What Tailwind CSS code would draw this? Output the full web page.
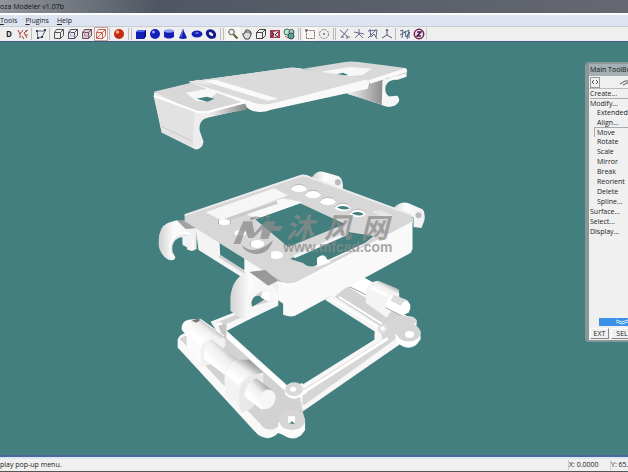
<!DOCTYPE html>
<html lang="en">
  <head>
    <meta charset="UTF-8" />
    <meta name="viewport" content="width=device-width, initial-scale=1.0" />
    <title>Zanoza Modeler v1.07b</title>
    <script src="https://cdn.jsdelivr.net/npm/@tailwindcss/browser@4"></script>
  </head>
  <body class="flex h-screen flex-col overflow-hidden bg-[#f0f0f0] font-['Open_Sans',sans-serif] text-[#222]">
    <!-- Title bar -->
    <header class="h-[13px] shrink-0 overflow-hidden whitespace-nowrap bg-linear-to-r from-[#92969b] via-[#505762] via-25% to-[#656871]">
      <h1 class="text-[7px] leading-[13px] text-[#111]">oza Modeler v1.07b</h1>
    </header>

    <!-- Menu -->
    <nav class="flex h-[13px] shrink-0 items-center gap-2 border-t-2 border-white bg-[#dde3f1] text-[7px] leading-[10px]">
      <a href="#tools"><u>T</u>ools</a>
      <a href="#plugins"><u>P</u>lugins</a>
      <a href="#help"><u>H</u>elp</a>
    </nav>

    <!-- Toolbar -->
    <div class="flex h-4 shrink-0 items-center border-y border-t-[#c9ccd2] border-b-[#3c5d8c] bg-[#f0efef] pl-[2px] [&_button]:grid [&_button]:h-[14px] [&_button]:w-[14px] [&_button]:shrink-0 [&_button]:place-items-center [&_svg]:h-3 [&_svg]:w-3 [&_svg]:fill-none">
      <button aria-label="Dummy" class="text-[8px] font-bold leading-3">D</button>
      <button aria-label="Vertices"><svg viewBox="0 0 12 12" stroke="#b33a35"><path d="M1 2l2 4 3-4M3 6v4M7 5l4-3M7 5l3 5M8 7h3" /><path d="M5 8l2 3M9 2v2" stroke="#555" /></svg></button>
      <span class="mx-px h-3 w-[2px] border-l border-[#bbb]"></span>
      <button aria-label="Polylines"><svg viewBox="0 0 12 12" stroke="#37435c"><path d="M2 3l8 0-3 6-4 1z" stroke-width=".8" /><path d="M1 2h2v2H1zM9 1h2v2H9zM6 8h2v2H6zM2 9h2v2H2z" fill="#37435c" stroke="none" /></svg></button>
      <span class="mx-px h-3 w-[2px] border-l border-[#bbb]"></span>
      <button aria-label="Wireframe"><svg viewBox="0 0 12 12" stroke="#555"><path d="M1.500 4.500h6v6h-6zM3.500 1.500h7v6l-3 3M1.500 4.500l2-3M7.500 4.500l3-3" /></svg></button>
      <button aria-label="Hidden lines"><svg viewBox="0 0 12 12" stroke="#544d60"><path d="M1.500 4.500h6v6h-6zM3.500 1.500h7v6l-3 3M1.500 4.500l2-3M7.500 4.500l3-3" /><path d="M3.500 2v6h6" stroke="#b5a9cc" /></svg></button>
      <button aria-label="Flat shading"><svg viewBox="0 0 12 12" stroke="#6c4c5f"><path d="M1.500 4.500h6v6h-6zM3.500 1.500h7v6l-3 3M1.500 4.500l2-3M7.500 4.500l3-3" fill="#ddccd5" /><path d="M3.500 2v6h6" stroke="#b58ba0" /></svg></button>
      <button aria-label="Textured" aria-pressed="true" class="border border-[#c9a5a0] bg-[#fff4f1]"><svg viewBox="0 0 12 12" stroke="#c56052"><path d="M1.500 4.500h6v6h-6zM3.500 1.500h7v6l-3 3M1.500 4.500l2-3M7.500 4.500l3-3M2 10l5-5" /></svg></button>
      <span class="mx-px h-3 w-[2px] border-l border-[#bbb]"></span>
      <button aria-label="Materials"><svg viewBox="0 0 12 12"><circle cx="6" cy="6" r="5" fill="#c32a14" /><path d="M3 10a5 5 0 0 0 8-4 5 5 0 0 1-8 4" fill="#821508" /><circle cx="4.500" cy="4" r="1.800" fill="#ffa27c" /></svg></button>
      <span class="mx-[2px] h-3 w-1 border-x border-[#bbb]"></span>
      <button aria-label="Box"><svg viewBox="0 0 12 12"><path d="M1 4l2-2h8v6l-2 3H1z" fill="#1420b5" /><path d="M1 4l2-2h8L9 4z" fill="#4c68f2" /><path d="M9 4l2-2v6l-2 3z" fill="#091075" /></svg></button>
      <button aria-label="Sphere"><svg viewBox="0 0 12 12"><circle cx="6" cy="6" r="5" fill="#1420b5" /><circle cx="4.500" cy="4" r="1.600" fill="#8aa0ff" /></svg></button>
      <button aria-label="Cylinder"><svg viewBox="0 0 12 12"><path d="M1 3v6q5 3 10 0V3z" fill="#1420b5" /><ellipse cx="6" cy="3" rx="5" ry="1.700" fill="#8aa0ee" /></svg></button>
      <button aria-label="Cone"><svg viewBox="0 0 12 12"><path d="M6 1l4 9q-4 2-8 0z" fill="#1420b5" /><path d="M6 1L4 9" stroke="#667cf0" /></svg></button>
      <button aria-label="Torus"><svg viewBox="0 0 12 12"><ellipse cx="6" cy="6" rx="5.500" ry="3.500" fill="#1420b5" /><ellipse cx="6" cy="5" rx="2" ry=".7" fill="#7f92ee" /></svg></button>
      <button aria-label="Tube"><svg viewBox="0 0 12 12"><ellipse cx="6" cy="6" rx="4" ry="3" transform="rotate(35 6 6)" stroke="#10198e" stroke-width="3" /></svg></button>
      <span class="mx-[2px] h-3 w-1 border-x border-[#bbb]"></span>
      <button aria-label="Zoom" aria-pressed="true" class="bg-[#f8f8f5]"><svg viewBox="0 0 12 12"><circle cx="4.500" cy="4" r="2.800" stroke="#555" fill="#e6eee7" /><path d="M6.500 6.500l4 4" stroke="#5e612d" stroke-width="2" /></svg></button>
      <button aria-label="Pan"><svg viewBox="0 0 12 12" stroke="#444"><path d="M3 6q-2-1-1 1l2 4h4l2-4V4L9 3 7 2 5 2 4 4zM5 3v2M7 3v2M9 4v2" fill="#ddd" /></svg></button>
      <button aria-label="Rotate view"><svg viewBox="0 0 12 12" stroke="#444"><path d="M1.500 4.500h6v6h-6zM1.500 4.500l3-3h6v6l-3 3M7.500 4.500l3-3" /></svg></button>
      <button aria-label="Fit view"><svg viewBox="0 0 12 12"><path d="M1 2h10v8H1z" fill="#a83a56" /><path d="M4 4l5-1v6L5 9z" fill="#eddce2" /><path d="M2 3l3 3-3 3M9 4L6 7l3 2" stroke="#4e2837" /></svg></button>
      <button aria-label="Fit all"><svg viewBox="0 0 12 12"><circle cx="4" cy="4" r="3" fill="#b5e0d2" stroke="#347362" /><circle cx="8.500" cy="4" r="2.500" fill="#a8cdc9" stroke="#455" /><circle cx="8" cy="8" r="3" fill="#58a698" stroke="#364f4c" /><path d="M2 8l3 2" stroke="#b05d52" /></svg></button>
      <span class="mx-[2px] h-3 w-[3px] border-x border-[#bbb]"></span>
      <button aria-label="Rectangle select" aria-pressed="true" class="bg-[#f8f8f5]"><svg viewBox="0 0 12 12" stroke="#765a64"><path d="M2.500 2.500h8v8h-8z" stroke-dasharray="2 1" /><path d="M1 2h3M2 1v3" /></svg></button>
      <button aria-label="Circle select"><svg viewBox="0 0 12 12" stroke="#777"><circle cx="6" cy="6" r="4.500" stroke-dasharray="2 1" /><path d="M6 5v2M5 6h2" stroke="#965a68" /></svg></button>
      <span class="mx-[2px] h-3 w-[3px] border-x border-[#bbb]"></span>
      <button aria-label="Snap to vertex"><svg viewBox="0 0 12 12" stroke="#626987"><path d="M1 2l8 7M9 1L2 10M2 9h3M8 9h3M8 8v3" /></svg></button>
      <button aria-label="Snap to edge"><svg viewBox="0 0 12 12" stroke="#626987"><path d="M1 4l10 2M6 1v6M6 6l-4 4M6 6l4 4" /></svg></button>
      <button aria-label="Snap to face"><svg viewBox="0 0 12 12" stroke="#626987"><path d="M1 3l9-1-1 7M3 1l1 8M1 10l8-8M4 9l3-3 3 5" /></svg></button>
      <button aria-label="Axis"><svg viewBox="0 0 12 12" stroke="#555b70"><path d="M6 2v5L1 10M6 7l5 3M5 3l1-2 1 2" /></svg></button>
      <span class="mx-px h-3 w-[2px] border-l border-[#bbb]"></span>
      <button aria-label="Surface tools"><svg viewBox="0 0 12 12" stroke="#4f6485"><path d="M1 3l3-1-1 8M1 7l9-5-2 9M6 3l1 6 4-5M10 4v6" /></svg></button>
      <button aria-label="About"><svg viewBox="0 0 12 12"><circle cx="6" cy="6" r="4.700" fill="#f2e5ed" stroke="#75244f" stroke-width="1.500" /><path d="M4 4h4L4 8h4" stroke="#491b5c" stroke-width="1.500" /></svg></button>
      <span class="h-3 w-px bg-[#ccc]"></span>
    </div>

    <!-- Viewport -->
    <main class="relative min-h-0 flex-1 overflow-hidden border-b-2 border-[#466b9a] bg-[#427f7e]">
      <svg class="h-full w-full" viewBox="0 42 628 415" role="img" aria-label="3D bracket assembly">
        <defs>
          <linearGradient id="tube" x1="0" y1="1" x2="1" y2="0">
            <stop offset=".3" stop-color="#fff" />
            <stop offset=".55" stop-color="#eee" />
            <stop offset=".8" stop-color="#999" />
          </linearGradient>
          <linearGradient id="clip" x1="0" y1="0" x2="1" y2="0">
            <stop offset="0" stop-color="#d2d2d2" />
            <stop offset=".4" stop-color="#fcfcfc" />
            <stop offset="1" stop-color="#eee" />
          </linearGradient>
          <linearGradient id="under" x1="0" y1="0" x2="1" y2="0">
            <stop offset="0" stop-color="#f4f4f4" />
            <stop offset="1" stop-color="#8c8c8c" />
          </linearGradient>
        </defs>

        <!-- base frame -->
        <g>
          <path d="M210 323l56-22 12 5-51 26-9 3z" fill="#f7f7f7" />
          <path d="M215 324l54-21 4 2-53 23z" fill="#d4d4d4" />
          <path d="M325 301l25-17 57 33 10 4v9l-17 15-25-3v-9z" fill="#f5f5f5" />
          <path d="M335 298l15-13 56 33-20 13z" fill="#d3d3d3" />
          <path d="M331 300l48 29M339 298l43 27" stroke="#fff" stroke-width="2" />
          <path d="M303 386l72-45q-1-14 8-15l20-9 10 1q7 4 2 10l2 4q8 7-1 15-8 5-16-1l-97 67-12-17z" fill="#f7f7f7" />
          <path d="M294 397l89-56-4-13 24-11 12 2q4 4-3 9l-18 14-90 65-9-4z" fill="#d6d6d6" />
          <path d="M294 400l94-60" stroke="#fff" stroke-width="3" />
          <circle cx="383" cy="330" r="5" fill="#dedede" /><ellipse cx="383" cy="330" rx="2.500" ry="2" fill="#fff" />
          <path d="M396 336v6q13 13 25-1v-8z" fill="#fff" />
          <ellipse cx="409" cy="334" rx="12" ry="9" fill="#d5d5d5" /><ellipse cx="410" cy="336" rx="4.500" ry="3.500" fill="#fff" />
          <path d="M177 341q3-8 12-5l36-5 62 56 16-2-1 30 3 8v9q-8 14-22 5l-5-2q-9 9-20 2l-81-88z" fill="#f8f8f8" />
          <path d="M179 340q20-10 48-2l61 54 12 7 4 20q-9 14-25 8-7 7-15 3z" fill="#d2d2d2" />
          <path d="M223 334l63 57q9 8 20 2" fill="none" stroke="#fff" stroke-width="4" />
          <path d="M285 391v5q9 9 18 0v-5z" fill="#fff" />
          <ellipse cx="294" cy="391" rx="9" ry="7" fill="#dadada" /><ellipse cx="293" cy="391" rx="3" ry="2.500" fill="#fff" />
          <path d="M278 424v8q11 14 27 0v-10z" fill="#fcfcfc" />
          <ellipse cx="292" cy="422" rx="13" ry="10" fill="#d6d6d6" /><path d="M288 418h7v7h-7z" fill="#fff" /><path d="M289 425l3-2 3 3z" fill="#427f7e" />
          <path d="M218 327l8-2v15l-4-2z" fill="#c6c6c6" /><ellipse cx="219" cy="325" rx="3" ry="1.500" fill="#fff" />
        </g>

        <!-- left shaft with sleeves -->
        <g>
          <path d="M181 331q-1-8 7-10l12-1 24 17-2 13-20 18-16-17v-13z" fill="#fbfbfb" />
          <path d="M190 321l10 0 25 18-12 3q-8 1-12 6l-12-11z" fill="url(#tube)" />
          <path d="M191 322l5 2 4-3-3-1z" fill="#777" />
          <path d="M200 368v-17q2-10 13-11l12 1v6l-11 13 6 4z" fill="#f1f1f1" />
          <path d="M211 341l29 22-15 14-22-17q0-14 8-19z" fill="url(#tube)" />
          <path d="M224 381q0-15 14-20h11l14 13-1 9-20 28-17-13z" fill="#f3f3f3" />
          <path d="M238 361l11 0 14 13-12 4q-9 2-13 9l-13-11q4-10 13-15z" fill="url(#tube)" />
          <path d="M239 410V391q4-13 16-15 7-1 8 4v17l-13 14-9 3z" fill="#e9e9e9" />
          <path d="M256 380l16 12 2 10q-3 10-13 9l-17-13q2-15 12-18z" fill="url(#tube)" />
          <ellipse cx="267" cy="401" rx="8" ry="10" transform="rotate(25 267 401)" fill="#f7f7f7" />
        </g>

        <!-- right shaft -->
        <g>
          <path d="M350 284l13-6 18 10-10 14-21-13z" fill="#fff" />
          <path d="M350 288l18 9" stroke="#999" />
          <path d="M366 304v-12q3-9 12-10l21 9 1 9-13 19z" fill="#f4f4f4" />
          <path d="M378 282l20 8 2 5q-8-4-13 3l-17-8z" fill="url(#tube)" />
          <path d="M392 296l14 5q8 4 3 13l-7 3-16-8q0-9 6-13z" fill="#fff" />
          <path d="M394 296l15 6q-5 0-8 5l-10-5z" fill="#ddd" />
          <path d="M402 317l-16-8" stroke="#aaa" />
        </g>

        <!-- middle frame -->
        <g>
          <path d="M312 178q5-8 13-5l14 4q5 3 4 14l-31-8z" fill="url(#clip)" />
          <ellipse cx="338" cy="183" rx="3" ry="3" fill="#bbb" />
          <path d="M392 211q8-10 17-7l14 6q3 3 2 11l-3 8-8-1v-10z" fill="url(#clip)" />
          <ellipse cx="419" cy="216" rx="3" ry="3" fill="#bbb" />
          <!-- far left clip -->
          <path d="M158 242q0-14 9-18l9-3 20 7v22l-5 2-9-3-2-10q-6 1-6 9l3 6-3 6q-4 3-9-1-8-7-7-17z" fill="url(#clip)" />
          <path d="M176 221l10 0 13 8-14 1z" fill="#a3a3a3" />
          <path d="M171 258q-5-13 4-21 7-5 14-2M182 238l10 4v8l-9-5z" fill="#e6e6e6" stroke="#fff" stroke-width="2" />
          <path d="M175 259l-3-6q-2-10 6-14l4-1v6l5 5-7 9z" fill="#427f7e" />
          <path d="M182 238q8-3 10 5v8l-10-5z" fill="#f2f2f2" />
          <path d="M195 228l25 15v15l24 13v9l-46-29z" fill="#f4f4f4" />
          <path d="M219 242l25 15v14l-24-13z" fill="#427f7e" />
          <path d="M219 257l25 16" stroke="#d1d1d1" stroke-width="3" />
          <!-- frame body -->
          <path d="M244 258l36 25 133-61v28l-2 4-116 63q-5 2-12-1v-11l-39-28z" fill="#f9f9f9" />
          <path fill-rule="evenodd" d="M184 216l115-39q5-2 11 1l100 37q5 3 3 8l-116 60q-7 4-16 0l-97-61zM255 220l45-16 45 21-57 23zM290 260l58-27 26 4-14 11-42 19q-10 2-15-3z" fill="#d7d7d7" />
          <path d="M184 216l115-39q5-2 11 1l100 37" fill="none" stroke="#ececec" stroke-width="2" />
          <path d="M205 213l69-24 14 7-67 25z" fill="#f6f6f6" />
          <path d="M243 213l40-14 20 4-48 17z" fill="#f8f8f8" />
          <path d="M225 221l52-18" stroke="#c9c9c9" stroke-width="3" />
          <path d="M294 258l54-24" stroke="#f5f5f5" stroke-width="3" />
          <path d="M317 259q7-6 10 1l4 3-14 5z" fill="#fff" />
          <g fill="#fff">
            <ellipse cx="299" cy="189" rx="8" ry="4" /><ellipse cx="313" cy="195" rx="8" ry="4" /><ellipse cx="328" cy="202" rx="8" ry="4" /><ellipse cx="343" cy="208" rx="8" ry="4" /><ellipse cx="358" cy="214" rx="8" ry="4" />
            <ellipse cx="224" cy="223" rx="6" ry="3" /><ellipse cx="240" cy="234" rx="6" ry="3" /><ellipse cx="257" cy="245" rx="7" ry="4" /><ellipse cx="276" cy="256" rx="7" ry="4" />
          </g>
          <path d="M337 208q7-3 13 1-6 3-13-1M352 214q7-3 12 1-5 3-12-1" fill="#427f7e" />
          <g fill="none" stroke="#b3b3b3">
            <path d="M291 189q2-4 8-4t8 4M305 195q2-4 8-4t8 4M320 202q2-4 8-4t8 4M335 208q2-4 8-4t8 4M350 214q2-4 8-4t8 4" />
            <path d="M218 221v4M230 221v4M250 243v4M270 254v4" />
          </g>
          <path d="M372 212l9-1 12 5-7 5z" fill="#e7e7e7" />
          <path d="M280 284q7 3 16 0l117-61" fill="none" stroke="#fff" />
          <!-- near left clip -->
          <path d="M230 298q2-19 16-24l6-1 26 10v24l-31 14q-7 0-17-9z" fill="url(#clip)" />
          <path d="M249 273l16-2 13 11-10 5z" fill="#999" />
          <path d="M245 320v-16q2-14 16-18l12 2 5 6v12l-10 4v-5l-16 8v5z" fill="#f7f7f7" />
          <path d="M251 308q0-9 9-15 7-2 10 4l-1 6z" fill="#d2d2d2" />
          <path d="M251 304q2-8 8-7l5 4-12 7z" fill="#427f7e" />
          <path d="M262 293q8-2 8 6l-1 4-8-4z" fill="#fff" />
        </g>

        <!-- top cover -->
        <g>
          <path d="M348 94l34-12 25-13v8l-9 3q-9-1-12 6-2 8 4 11l8-1q4 6-2 9-7 4-14 0z" fill="#f9f9f9" />
          <path d="M347 94l22-13 14-2v26z" fill="url(#under)" />
          <path d="M383 79l12 0q-11 3-11 13l5 5 8-1q4 6-2 10-7 2-13-1z" fill="#f5f5f5" />
          <path d="M153 93l36-9 57 16v9l-39 9q-9 2-8 13l4 11q-1 8-8 8l-34-17-7-33z" fill="#ededed" />
          <path d="M153 97l41 15-2 36-31-15z" fill="#e2e2e2" />
          <path d="M161 127l31 15" stroke="#ccc" />
          <path d="M207 113l39-10v7l-39 7z" fill="url(#under)" />
          <path d="M153 92l46-11 48 21-39 10q-10 3-18-2z" fill="#d8d8d8" />
          <path d="M153 96l38 14q8 4 17 2l39-10" fill="none" stroke="#fff" stroke-width="2" />
          <path d="M185 93l22-4 10 4-12 9-10-1z" fill="#f7f7f7" /><path d="M196 99l10-2 8 2-7 3z" fill="#427f7e" />
          <path d="M303 69l42-7q6-1 14 0l45 6q4 1 3 6l-41 9-15-4z" fill="#d8d8d8" />
          <path d="M370 82l37-12" stroke="#fafafa" stroke-width="4" />
          <path d="M321 72l28-5 23 2-9 6-25 3z" fill="#f7f7f7" /><path d="M335 75l8-2 5 2-6 3z" fill="#427f7e" />
          <path d="M188 82l102-14q8-1 16 2l64 11-2 8-97 21q-10 4-19 1-6-2-7-7z" fill="#f9f9f9" />
          <path d="M188 82l102-14q8-1 16 2l64 9-95 24q-13 4-24-1z" fill="#dbdbdb" />
          <path d="M202 81l13-1 63 19-10 2z" fill="#fafafa" />
          <path d="M188 82l10-2 6 1 8 5z" fill="#e8e8e8" />
        </g>

        <!-- watermark -->
        <g fill="#8b8b8b" fill-opacity=".75">
          <path d="M233 245l10-23h9l2 12 11-12h11l-3 5h10l-3 5h-9l-3 8h-8l2-10-9 9h-5l-3-8-5 14z" />
          <path d="M241 246q14 12 32-5-5 15-18 14-10-1-14-9M250 218q9-2 15 2l-7-1-8 2zM265 217h2v-2h1v2h2v1h-2v3h-1v-3h-2z" />
          <text y="239" font-family="Noto Sans CJK SC, sans-serif" font-size="28" font-weight="700" font-style="italic"><tspan x="286">沐</tspan><tspan x="324">风</tspan><tspan x="361">网</tspan></text>
          <text x="283" y="253" font-family="Liberation Sans, sans-serif" font-size="14" font-weight="700">www.mfcad.com</text>
        </g>
      </svg>

      <!-- Toolbox window -->
      <aside class="absolute top-5 right-0 flex h-[280px] w-[43px] flex-col overflow-hidden whitespace-nowrap rounded-l-sm border-y-2 border-l-4 border-[#8a9698] bg-[#f0f0f0] text-[7px] leading-[10px]">
        <h2 class="h-3 shrink-0 bg-[#a4b0b5] pl-px leading-3 text-[#111]">Main ToolBox</h2>
        <div class="flex h-[13px] shrink-0 items-center gap-5 border-b border-[#bbb] pl-px">
          <button aria-label="Collapse" class="grid h-[11px] w-[10px] place-items-center border border-[#999]"><svg class="h-2 w-2" viewBox="0 0 8 8" fill="none" stroke="#555"><path d="M3 2L1 4l2 2M5 2l2 2-2 2" /></svg></button>
          <svg class="h-2 w-3 shrink-0" viewBox="0 0 12 8" fill="none" stroke="#555"><path d="M0 6l5-3h7M3 7l4-2h5" /></svg>
        </div>
        <ul class="flex-1 pl-px">
          <li class="leading-[9px]">Create...</li>
          <li class="border-t border-[#aaa] leading-[9px]">Modify...</li>
          <li class="pl-[7px]">Extended...</li>
          <li class="pl-[7px] leading-[9px]">Align...</li>
          <li class="ml-1 border-t border-l border-[#aaa] pl-[2px] leading-[9px]">Move</li>
          <li class="pl-[7px]">Rotate</li>
          <li class="pl-[7px]">Scale</li>
          <li class="pl-[7px]">Mirror</li>
          <li class="pl-[7px]">Break</li>
          <li class="pl-[7px]">Reorient</li>
          <li class="pl-[7px]">Delete</li>
          <li class="pl-[7px]">Spline...</li>
          <li>Surface...</li>
          <li>Select...</li>
          <li>Display...</li>
        </ul>
        <button aria-label="Scroll down" class="ml-[10px] grid h-2 shrink-0 place-items-center bg-[#3a91e5]"><svg class="ml-4 h-[6px] w-3" viewBox="0 0 12 6" fill="none" stroke="#d5eaff"><path d="M0 1l6 2 6-2M0 3l6 2 6-2" /></svg></button>
        <div class="flex h-[14px] shrink-0 items-center gap-[2px] pl-px">
          <button class="h-[11px] w-[19px] shrink-0 border border-t-white border-r-[#888] border-b-[#888] border-l-white leading-[9px]">EXT</button>
          <button class="h-[11px] w-[22px] shrink-0 border border-t-white border-r-[#888] border-b-[#888] border-l-white leading-[9px]">SEL</button>
        </div>
      </aside>
    </main>

    <!-- Status bar -->
    <footer class="flex h-[15px] shrink-0 items-center overflow-hidden whitespace-nowrap border-t-2 border-b border-t-[#dfe5f5] border-b-[#555] text-[7px] leading-[10px]">
      <span class="flex-1">play pop-up menu.</span>
      <span class="w-[42px] border-l border-[#ccc]">X: 0.0000</span>
      <span class="w-[18px] overflow-hidden border-l border-[#ccc]">Y: 65.0000</span>
    </footer>
  </body>
</html>
